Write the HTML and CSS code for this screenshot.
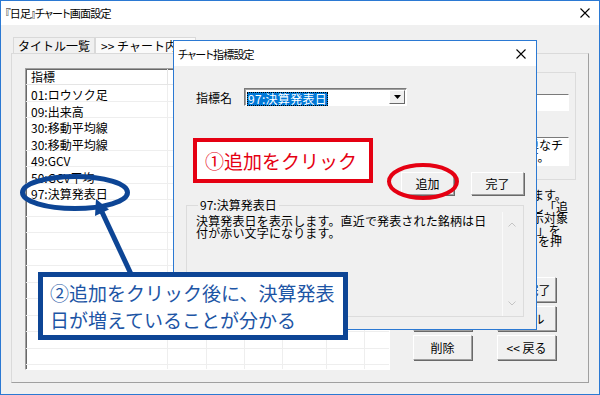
FILE: index.html
```html
<!DOCTYPE html>
<html lang="ja">

<head>
    <meta charset="UTF-8">
    <meta name="viewport" content="width=device-width, initial-scale=1.0">
    <title>チャート画面設定</title>

    <link rel="stylesheet" href="styles.css">
</head>

<body>
    <!-- Main window -->
    <div class="window">
        <div class="titlebar">
            <span class="title">『日足』チャート画面設定</span>
            <svg class="close" width="10" height="10" viewBox="0 0 10 10"><path d="M0.5 0.5 L9.5 9.5 M9.5 0.5 L0.5 9.5" stroke="#000" stroke-width="1.1" /></svg>
        </div>

        <div class="client">
            <div class="tabs">
                <div class="tab">タイトル一覧</div>
                <div class="tab active">&gt;&gt; チャート内容</div>
            </div>

            <div class="panel">
                <div class="listview">
                    <div class="lv-head">
                        <div class="lv-col first">指標</div>
                        <div class="lv-col w39"></div>
                        <div class="lv-col w38"></div>
                        <div class="lv-col w38"></div>
                        <div class="lv-col w44"></div>
                        <div class="lv-col w38"></div>
                    </div>
                    <div class="lv-body">
                        <div class="lv-row">01:ロウソク足</div>
                        <div class="lv-row">09:出来高</div>
                        <div class="lv-row">30:移動平均線</div>
                        <div class="lv-row">30:移動平均線</div>
                        <div class="lv-row">49:GCV</div>
                        <div class="lv-row">50:GCV平均</div>
                        <div class="lv-row">97:決算発表日</div>
                    </div>
                </div>

                <div class="side">
                    <div class="frame">
                        <div class="field"></div>
                        <div class="memo">指標の詳しい説明と簡単なチャートを表示しています。</div>
                    </div>
                    <p class="help">指標の一覧を変更編集します。指標を選択し詳細を確認し「追加」ボタンで設定した表示対象指標を追加します。「変更」を押すと変更され、「完了」を押して保存します。</p>
                    <div class="btn-grid">
                        <button class="btn">追加</button>
                        <button class="btn">変更完了</button>
                        <button class="btn">上へ</button>
                        <button class="btn">ツール</button>
                        <button class="btn">削除</button>
                        <button class="btn">&lt;&lt; 戻る</button>
                    </div>
                </div>
            </div>
        </div>
    </div>

    <!-- Dialog -->
    <div class="dialog">
        <div class="dlg-title">
            <span>チャート指標設定</span>
            <svg class="close" width="10" height="10" viewBox="0 0 10 10"><path d="M0.5 0.5 L9.5 9.5 M9.5 0.5 L0.5 9.5" stroke="#000" stroke-width="1.1" /></svg>
        </div>
        <div class="dlg-body">
            <div class="dlg-row">
                <label class="dlg-label">指標名</label>
                <div class="combo">
                    <span class="combo-text"><span class="sel">97:決算発表日</span></span>
                    <span class="combo-btn"><svg width="7" height="4" viewBox="0 0 7 4"><path d="M0 0 H7 L3.5 4 Z" fill="#000" /></svg></span>
                </div>
            </div>

            <div class="dlg-buttons">
                <button class="btn">追加</button>
                <button class="btn">完了</button>
            </div>

            <fieldset class="group">
                <legend>97:決算発表日</legend>
                <div class="group-inner">
                    <p class="desc">決算発表日を表示します。直近で発表された銘柄は日付が赤い文字になります。</p>
                    <div class="scrollbar">
                        <svg width="8" height="5" viewBox="0 0 8 5"><path d="M0.5 4.5 L4 1 L7.5 4.5" fill="none" stroke="#c4c4c4" /></svg>
                        <svg width="8" height="5" viewBox="0 0 8 5"><path d="M0.5 0.5 L4 4 L7.5 0.5" fill="none" stroke="#c4c4c4" /></svg>
                    </div>
                </div>
            </fieldset>
        </div>
    </div>

    <!-- Annotations -->
    <div class="note note-red">①追加をクリック</div>
    <svg class="marks" width="600" height="395" viewBox="0 0 600 395">
        <ellipse cx="423" cy="181.5" rx="34" ry="16.5" fill="none" stroke="#e50012" stroke-width="4" />
        <ellipse cx="75" cy="192.5" rx="52.5" ry="16" fill="none" stroke="#0d4595" stroke-width="5" />
        <line x1="131" y1="274" x2="102" y2="212" stroke="#0d4595" stroke-width="5" />
        <polygon points="96,199 109,209.5 95,216" fill="#0d4595" />
    </svg>
    <div class="note note-blue">②追加をクリック後に、決算発表<br>日が増えていることが分かる</div>
</body>

</html>
```

FILE: styles.css
```css
* {
    box-sizing: border-box;
}

body {
    margin: 0;
    width: 600px;
    height: 395px;
    overflow: hidden;
    position: relative;
    background-color: #f0f0f0;
    font-family: "Noto Sans CJK JP", sans-serif;
    font-size: 12px;
    color: #000;
}

p {
    margin: 0;
}

/* main window */
.window {
    height: 395px;
    border: 1px solid #2b79d3;
    display: flex;
    flex-direction: column;
}

.titlebar {
    height: 24px;
    background-color: #fff;
    display: flex;
    align-items: center;
    justify-content: space-between;
    padding: 0 9px 0 4px;
    font-size: 11px;
    letter-spacing: -0.8px;
    font-feature-settings: "palt";
    line-height: 14px;
}

.client {
    flex: 1;
    display: flex;
    flex-direction: column;
    padding: 12px 10px 11px 10px;
}

.tabs {
    display: flex;
    padding-left: 2px;
    height: 16px;
}

.tab {
    height: 16px;
    padding: 0 4px;
    line-height: 15px;
    white-space: nowrap;
    border: 1px solid #d9d9d9;
    border-bottom: none;
    background-color: #f0f0f0;
}

.tab.active {
    background-color: #fafafa;
    padding: 0 6px 0 5px;
}

.panel {
    flex: 1;
    display: flex;
    border: 1px solid;
    border-color: #dadada #a0a0a0 #a0a0a0 #dadada;
    padding: 14px 0 0 13px;
}

/* list view */
.listview {
    width: 365px;
    height: 302px;
    background-color: #fff;
    border: 1px solid;
    border-color: #a0a0a0 #fff #fff #a0a0a0;
    box-shadow: inset 1px 1px 0 #696969;
    display: flex;
    flex-direction: column;
    overflow: hidden;
}

.lv-head {
    display: flex;
    height: 16px;
    flex-shrink: 0;
    border-bottom: 1px solid #e5e5e5;
}

.lv-col {
    height: 15px;
    border-right: 1px solid #e5e5e5;
    line-height: 15px;
}

.lv-col.first {
    width: 142px;
    padding-left: 5px;
}

.w39 { width: 39px; }
.w38 { width: 38px; }
.w44 { width: 44px; }

.lv-body {
    flex: 1;
    padding-top: 1px;
    background-image:
        repeating-linear-gradient(to bottom, transparent 0 15.5px, #eeeeee 15.5px 16.5px),
        linear-gradient(to right, transparent 0 141px, #eeeeee 141px 142px, transparent 142px 180px, #eeeeee 180px 181px, transparent 181px 218px, #eeeeee 218px 219px, transparent 219px 256px, #eeeeee 256px 257px, transparent 257px 300px, #eeeeee 300px 301px, transparent 301px 338px, #eeeeee 338px 339px, transparent 339px);
}

.lv-row {
    height: 16.5px;
    line-height: 17px;
    padding-left: 5px;
}

/* right side of main window */
.side {
    margin-left: 5px;
    width: 192px;
    display: flex;
    flex-direction: column;
}

.frame {
    margin-top: 4px;
    width: 181px;
    height: 108px;
    border: 1px solid #dcdcdc;
    padding: 21px 6px 0 8px;
}

.field,
.memo {
    background-color: #fff;
    border: 1px solid;
    border-color: #7a7a7a #fff #fff #7a7a7a;
}

.field {
    height: 17px;
}

.memo {
    margin-top: 26px;
    height: 29px;
    padding: 1px 2px;
    line-height: 12px;
    overflow: hidden;
}

.help {
    margin-top: 9px;
    width: 175px;
    padding-left: 5px;
    height: 58px;
    line-height: 11.5px;
    overflow: hidden;
}

.btn-grid {
    margin-top: 30px;
    padding-left: 18px;
    display: grid;
    grid-template-columns: 59px 59px;
    column-gap: 25px;
    row-gap: 4px;
}

.btn {
    height: 25px;
    padding: 0;
    font-family: inherit;
    font-size: 12px;
    color: #000;
    background-color: #f0f0f0;
    border: 1px solid;
    border-color: #fff #a0a0a0 #a0a0a0 #fff;
    box-shadow: 1px 1px 0 #696969;
}

/* dialog */
.dialog {
    position: absolute;
    left: 173px;
    top: 40px;
    width: 364px;
    height: 290px;
    border: 1px solid #2b79d3;
    background-color: #f0f0f0;
    display: flex;
    flex-direction: column;
}

.dlg-title {
    height: 25px;
    background-color: #fff;
    display: flex;
    align-items: center;
    justify-content: space-between;
    padding: 0 10px 0 4px;
    font-size: 11px;
    letter-spacing: -0.8px;
    font-feature-settings: "palt";
}

.dlg-body {
    padding: 22px 12px 0 12px;
}

.dlg-row {
    display: flex;
    align-items: center;
    height: 18px;
}

.dlg-label {
    width: 58px;
    padding-left: 10px;
}

.combo {
    width: 163px;
    height: 18px;
    display: flex;
    background-color: #fff;
    border: 1px solid;
    border-color: #7a7a7a #fff #fff #7a7a7a;
    box-shadow: inset 1px 1px 0 #a0a0a0;
    padding: 1px;
}

.combo-text {
    flex: 1;
    padding-left: 1px;
}

.sel {
    display: inline-block;
    height: 14px;
    line-height: 14px;
    padding: 0 1px;
    letter-spacing: 0.3px;
    color: #fff;
    background-color: #0078d7;
    outline: 1px dotted #000;
    outline-offset: -1px;
}

.combo-btn {
    width: 16px;
    display: flex;
    align-items: center;
    justify-content: center;
    background-color: #f0f0f0;
    border: 1px solid;
    border-color: #fff #696969 #696969 #fff;
}

.dlg-buttons {
    margin-top: 66px;
    display: flex;
    justify-content: flex-end;
    gap: 17px;
}

.dlg-buttons .btn {
    width: 53px;
    height: 23px;
}

.group {
    margin: 3px 0 0 0;
    padding: 0 0 0 9px;
    height: 119px;
    min-width: 0;
    border: 1px solid #dcdcdc;
}

.group legend {
    padding: 0 2px;
    margin-left: 2px;
    line-height: 14px;
}

.group-inner {
    display: flex;
    height: 104px;
}

.desc {
    flex: 1;
    padding: 3px 10px 0 0;
    line-height: 12px;
    letter-spacing: 0.15px;
}

.scrollbar {
    width: 19px;
    margin-right: 2px;
    border-left: 1px solid #fafafa;
    display: flex;
    flex-direction: column;
    align-items: center;
    justify-content: space-between;
    padding: 10px 0 10px;
}

/* annotations */
.marks {
    position: absolute;
    left: 0;
    top: 0;
    pointer-events: none;
}

.note {
    position: absolute;
    background-color: #fff;
    font-size: 19px;
}

.note-red {
    left: 193px;
    top: 138px;
    width: 180px;
    height: 45px;
    border: 4px solid #e50012;
    color: #e50012;
    padding-left: 8px;
    line-height: 37px;
}

.note-blue {
    left: 38px;
    top: 272px;
    width: 310px;
    height: 68px;
    border: 5px solid #0d4595;
    color: #1d55a5;
    padding: 2px 0 0 7px;
    line-height: 27px;
}
```
